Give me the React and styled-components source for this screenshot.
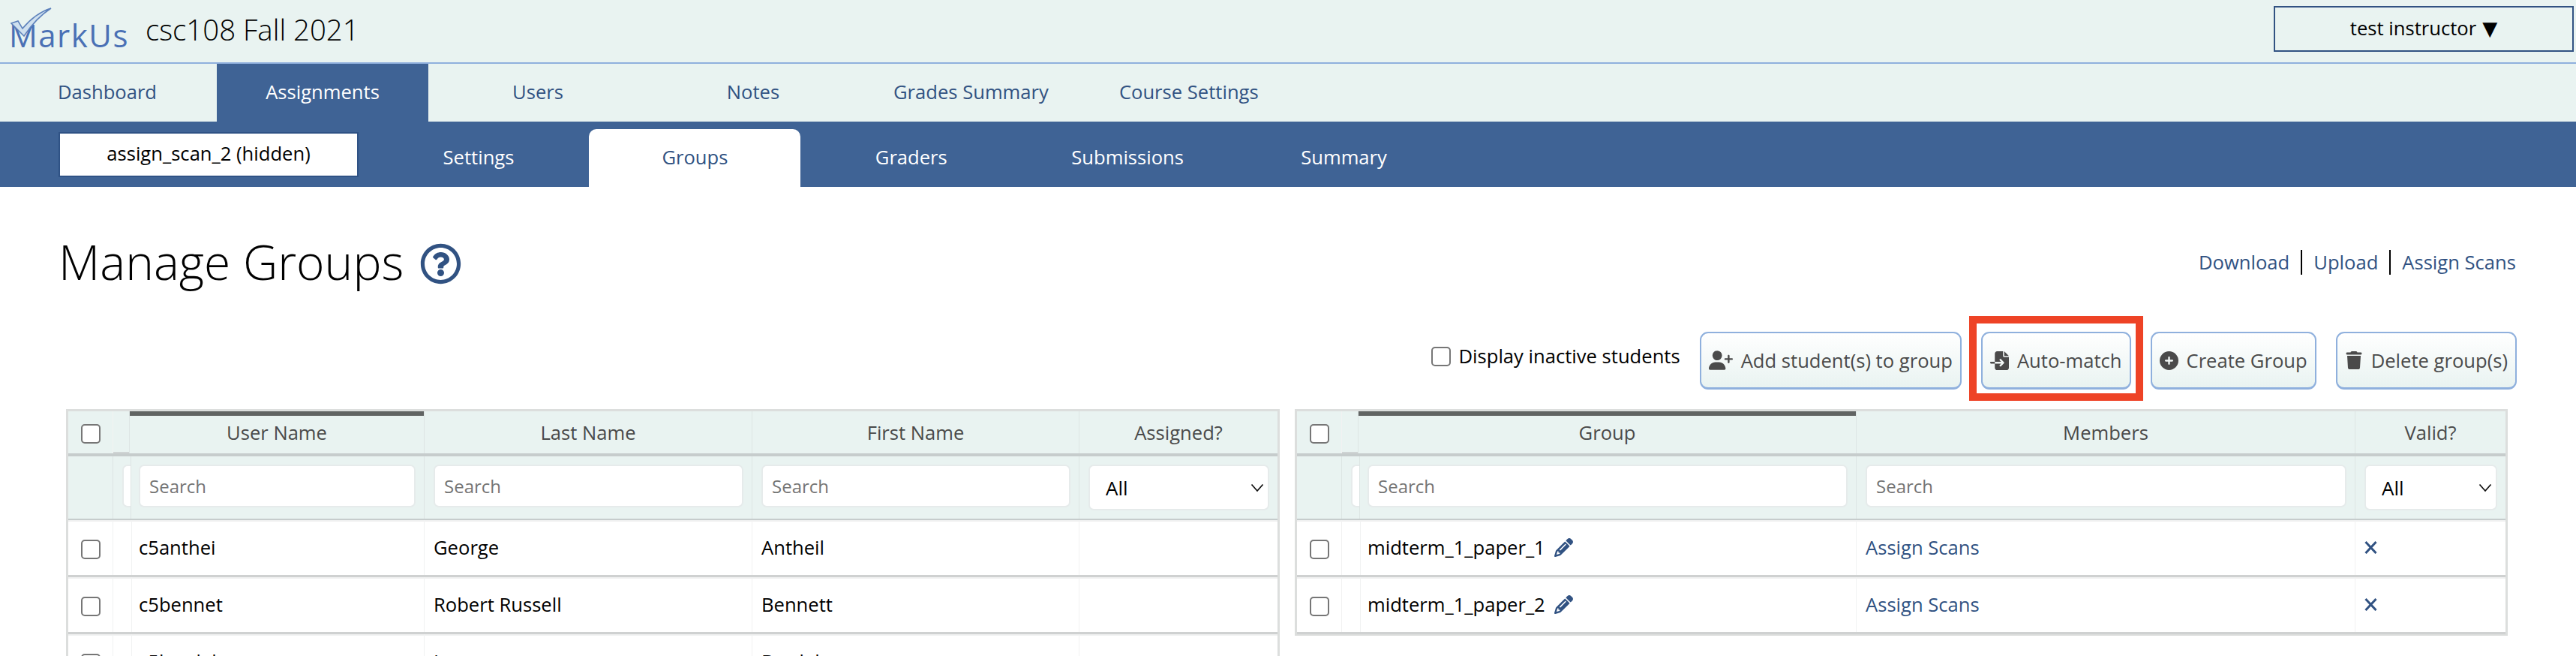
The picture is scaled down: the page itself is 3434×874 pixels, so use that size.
import React from 'react';
import styled, { createGlobalStyle } from 'styled-components';
import { FaCirclePlus, FaFileImport, FaPencil, FaTrash, FaUserPlus } from 'react-icons/fa6';
import { FaRegQuestionCircle } from 'react-icons/fa';

const blue = '#3f6395';
const ink = '#315282';
const mist = '#e9f3f1';

const Global = createGlobalStyle`
  html, body {
    margin: 0;
    height: 874px;
    overflow: hidden;
    background: #fff;
    color: #000;
    font-family: "Open Sans", "Liberation Sans", sans-serif;
    font-size: 25.6px;
  }
  * { box-sizing: border-box; }
`;

const Header = styled.header`
  height: 85px;
  background: ${mist};
  border-bottom: 2px solid #8fb0dd;
  display: flex;
  align-items: flex-start;
  justify-content: space-between;
`;

const Brand = styled.div`
  display: flex;
  align-items: center;
  height: 83px;
`;

const Logo = styled.div`
  position: relative;
  width: 194px;
  height: 83px;
  padding: 23px 0 0 12px;
  color: #4a70b5;
  font-size: 42px;
  font-weight: 400;
  line-height: 48px;
  letter-spacing: 1.5px;
  white-space: nowrap;
`;

const LogoMark = styled.svg`
  position: absolute;
  left: 0;
  top: 0;
`;

const CourseName = styled.div`
  font-size: 38.4px;
  font-weight: 300;
  padding-bottom: 6px;
`;

const UserMenu = styled.button`
  width: 400px;
  height: 61px;
  margin: 8px 3px 0 0;
  background: ${mist};
  border: 2px solid ${ink};
  color: #000;
  font: inherit;
  display: flex;
  align-items: center;
  justify-content: center;
  gap: 8px;
  padding: 0 0 2px;
`;

const MenuArrow = styled.span`
  font-family: "DejaVu Sans", sans-serif;
  font-size: 26px;
  line-height: 1;
`;

const MainNav = styled.nav`
  height: 77px;
  background: ${mist};
  display: flex;
  gap: 5px;
  padding-left: 2px;
`;

const NavTab = styled.a`
  min-width: 282px;
  padding: 0 41px 3px;
  display: flex;
  align-items: center;
  justify-content: center;
  color: ${p => p.$active ? '#fff' : ink};
  background: ${p => p.$active ? blue : 'transparent'};
`;

const SubNav = styled.nav`
  height: 87px;
  background: ${blue};
  display: flex;
  align-items: flex-end;
  padding-left: 78px;
`;

const AssignmentPick = styled.div`
  width: 400px;
  height: 60px;
  align-self: flex-start;
  margin: 14px 19px 0 0;
  background: #fff;
  border: 2px solid #2f5285;
  display: flex;
  align-items: center;
  justify-content: center;
  padding-bottom: 4px;
`;

const SubTabs = styled.div`
  display: flex;
  gap: 6.4px;
`;

const SubTab = styled.a`
  width: 282px;
  height: 77px;
  padding-bottom: 3px;
  display: flex;
  align-items: center;
  justify-content: center;
  border-radius: 10px 10px 0 0;
  color: ${p => p.$active ? ink : '#fff'};
  background: ${p => p.$active ? '#fff' : 'transparent'};
`;

const Main = styled.main`
  padding: 56px 79px 0 78px;
`;

const TitleRow = styled.div`
  height: 88px;
  display: flex;
  align-items: center;
  justify-content: space-between;
`;

const Title = styled.h1`
  margin: 0;
  font-size: 64px;
  font-weight: 300;
  line-height: 88px;
  display: flex;
  align-items: center;
  gap: 22px;
  color: #000;
  svg { color: ${ink}; margin-top: 4px; }
`;

const Links = styled.div`
  display: flex;
  align-items: center;
  margin-right: 1px;
`;

const PageLink = styled.a`
  color: ${ink};
  line-height: 33px;
  padding: 0 15px;
  & + & { border-left: 2px solid #000; }
  &:last-child { padding-right: 0; }
`;

const Actions = styled.div`
  margin-top: 49px;
  display: flex;
  justify-content: flex-end;
  align-items: center;
  gap: 26px;
`;

const InactiveToggle = styled.label`
  display: flex;
  align-items: center;
  gap: 11px;
  padding-bottom: 12px;
`;

const Check = styled.input.attrs({ type: 'checkbox' })`
  appearance: none;
  display: block;
  width: 26px;
  height: 26px;
  margin: ${p => p.$nudge || 0} 0 0;
  background: #fff;
  border: 2px solid #767676;
  border-radius: 5px;
`;

const ActionButton = styled.button`
  height: 77px;
  padding: 0 10px;
  display: flex;
  align-items: center;
  gap: 11px;
  font: inherit;
  color: #4a4a4a;
  background: linear-gradient(#fff, #e9f3f1);
  border: 2px solid #8fb0dd;
  border-bottom-width: 3px;
  border-radius: 11px;
  white-space: nowrap;
`;

const Highlight = styled.div`
  position: relative;
  &::after {
    content: '';
    position: absolute;
    inset: -21px -16px -15px;
    border: 10px solid #ee4326;
    pointer-events: none;
  }
`;

const Tables = styled.div`
  margin: 26px -69px 0 10px;
  display: grid;
  grid-template-columns: 1618px 1617px;
  gap: 20px;
  align-items: start;
`;

const Panel = styled.section`
  border: 3px solid #dcdedd;
  border-bottom-width: 2px;
`;

const Row = styled.div`
  display: grid;
  grid-template-columns: ${p => p.$cols};
`;

const HeadRow = styled(Row)`
  height: 60px;
  background: ${mist};
  border-bottom: 4px solid #c6cccc;
`;

const FilterRow = styled(Row)`
  height: 85px;
  background: ${mist};
  border-bottom: 2px solid #c6cccc;
`;

const BodyRow = styled(Row)`
  height: 76px;
  border-bottom: 3px solid #cfd1d1;
  box-shadow: inset 0 2px 0 #f0f1f1;
`;

const HeadCell = styled.div`
  display: flex;
  align-items: center;
  justify-content: center;
  color: #4a4a4a;
  border-right: 1px solid #dde5e4;
  box-shadow: ${p => p.$sorted ? 'inset 0 6px 0 #616463' : p.$stub ? 'inset 0 -2px 0 #cfd4d4' : 'none'};
  &:last-child { border-right: 0; }
`;

const FilterCell = styled.div`
  position: relative;
  padding: 11px 11px 0 12px;
  overflow: hidden;
  border-right: 1px solid #dde5e4;
  &:last-child { border-right: 0; }
`;

const Search = styled.input`
  display: block;
  width: ${p => p.$stub ? '60px' : '100%'};
  height: 57px;
  padding: 0 12px;
  font: inherit;
  font-size: 24px;
  background: #fff;
  border: 2px solid #e6ebeb;
  border-radius: 7px;
  outline: 0;
  &::placeholder { color: #757575; opacity: 1; }
`;

const Select = styled.select`
  display: block;
  width: 100%;
  height: 61px;
  padding: 0 0 0 21px;
  appearance: none;
  font: inherit;
  font-size: 26px;
  color: #000;
  background: #fff;
  border: 2px solid #e6ebeb;
  border-radius: 7px;
`;

const Chevron = styled.svg`
  position: absolute;
  right: 18px;
  top: 36px;
  pointer-events: none;
`;

const Cell = styled.div`
  display: flex;
  align-items: center;
  gap: 12px;
  padding: 0 12px 1px;
  border-right: 1px solid #f1f2f2;
  white-space: nowrap;
  &:last-child { border-right: 0; }
`;

const CheckCell = styled(Cell)`
  justify-content: center;
  padding: 0;
`;

const CellLink = styled.a`
  color: ${ink};
`;

const InvalidMark = styled.svg`
  color: ${ink};
`;

const leftCols = '60px 22px 393px 437px 436px 264px';
const rightCols = '60px 22px 664px 665px 200px';

const students = [
  ['c5anthei', 'George', 'Antheil'],
  ['c5bennet', 'Robert Russell', 'Bennett'],
  ['c5bradel', 'Leo', 'Bradel'],
];

const groups = ['midterm_1_paper_1', 'midterm_1_paper_2'];

function SelectFilter() {
  return (
    <FilterCell>
      <Select defaultValue="all">
        <option value="all">All</option>
      </Select>
      <Chevron width="18" height="12" viewBox="0 0 18 12">
        <path d="M1.5 1.5 L9 10 L16.5 1.5" fill="none" stroke="#111" strokeWidth="1.8" />
      </Chevron>
    </FilterCell>
  );
}

function TableHead({ cols, titles }) {
  return (
    <>
      <HeadRow $cols={cols}>
        <CheckCell as={HeadCell}><Check $nudge="4px" /></CheckCell>
        <HeadCell $stub />
        {titles.map((title, index) => (
          <HeadCell key={title} $sorted={index === 0}>{title}</HeadCell>
        ))}
      </HeadRow>
      <FilterRow $cols={cols}>
        <FilterCell />
        <FilterCell><Search $stub /></FilterCell>
        {titles.slice(0, -1).map(title => (
          <FilterCell key={title}><Search placeholder="Search" /></FilterCell>
        ))}
        <SelectFilter />
      </FilterRow>
    </>
  );
}

export default function App() {
  return (
    <>
      <Global />
      <Header>
        <Brand>
          <Logo>
            MarkUs
            <LogoMark width="80" height="60" viewBox="0 0 80 60">
              <path d="M15 31 L24 28 L30 38 C40 26 52 16 68 11 C54 20 42 33 32 48 Z" fill="#cfe0ef" stroke="#5c80bb" strokeWidth="1.5" />
            </LogoMark>
          </Logo>
          <CourseName>csc108 Fall 2021</CourseName>
        </Brand>
        <UserMenu>test instructor <MenuArrow>▼</MenuArrow></UserMenu>
      </Header>
      <MainNav>
        <NavTab>Dashboard</NavTab>
        <NavTab $active>Assignments</NavTab>
        <NavTab>Users</NavTab>
        <NavTab>Notes</NavTab>
        <NavTab>Grades Summary</NavTab>
        <NavTab>Course Settings</NavTab>
      </MainNav>
      <SubNav>
        <AssignmentPick>assign_scan_2 (hidden)</AssignmentPick>
        <SubTabs>
          <SubTab>Settings</SubTab>
          <SubTab $active>Groups</SubTab>
          <SubTab>Graders</SubTab>
          <SubTab>Submissions</SubTab>
          <SubTab>Summary</SubTab>
        </SubTabs>
      </SubNav>
      <Main>
        <TitleRow>
          <Title>Manage Groups <FaRegQuestionCircle size={55} /></Title>
          <Links>
            <PageLink>Download</PageLink>
            <PageLink>Upload</PageLink>
            <PageLink>Assign Scans</PageLink>
          </Links>
        </TitleRow>
        <Actions>
          <InactiveToggle><Check />Display inactive students</InactiveToggle>
          <ActionButton><FaUserPlus size={32} />Add student(s) to group</ActionButton>
          <Highlight>
            <ActionButton><FaFileImport size={25} />Auto-match</ActionButton>
          </Highlight>
          <ActionButton><FaCirclePlus size={25} />Create Group</ActionButton>
          <ActionButton><FaTrash size={24} />Delete group(s)</ActionButton>
        </Actions>
        <Tables>
          <Panel>
            <TableHead cols={leftCols} titles={['User Name', 'Last Name', 'First Name', 'Assigned?']} />
            {students.map(([user, last, first]) => (
              <BodyRow key={user} $cols={leftCols}>
                <CheckCell><Check $nudge="4px" /></CheckCell>
                <Cell />
                <Cell>{user}</Cell>
                <Cell>{last}</Cell>
                <Cell>{first}</Cell>
                <Cell />
              </BodyRow>
            ))}
          </Panel>
          <Panel>
            <TableHead cols={rightCols} titles={['Group', 'Members', 'Valid?']} />
            {groups.map(group => (
              <BodyRow key={group} $cols={rightCols}>
                <CheckCell><Check $nudge="4px" /></CheckCell>
                <Cell />
                <Cell>{group} <FaPencil size={25} color={ink} /></Cell>
                <Cell><CellLink>Assign Scans</CellLink></Cell>
                <Cell>
                  <InvalidMark width="17" height="17" viewBox="0 0 17 17">
                    <path d="M1.5 1 L15.5 16 M15.5 1 L1.5 16" stroke="currentColor" strokeWidth="3" fill="none" />
                  </InvalidMark>
                </Cell>
              </BodyRow>
            ))}
          </Panel>
        </Tables>
      </Main>
    </>
  );
}
